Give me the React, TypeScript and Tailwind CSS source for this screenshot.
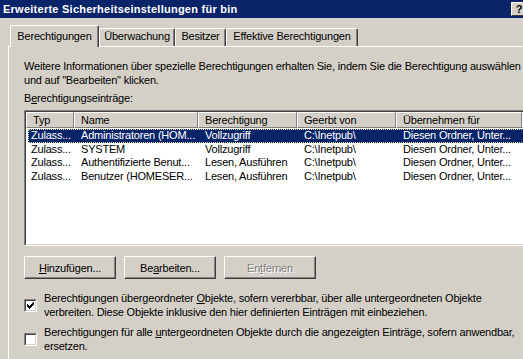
import React from "react";

const rows = [
  ["Zulass...", "Administratoren (HOM...", "Vollzugriff", "C:\\Inetpub\\", "Diesen Ordner, Unter..."],
  ["Zulass...", "SYSTEM", "Vollzugriff", "C:\\Inetpub\\", "Diesen Ordner, Unter..."],
  ["Zulass...", "Authentifizierte Benut...", "Lesen, Ausführen", "C:\\Inetpub\\", "Diesen Ordner, Unter..."],
  ["Zulass...", "Benutzer (HOMESER...", "Lesen, Ausführen", "C:\\Inetpub\\", "Diesen Ordner, Unter..."],
];

const headers = [
  { label: "Typ", w: "w-[48px]" },
  { label: "Name", w: "w-[124px]" },
  { label: "Berechtigung", w: "w-[99px]" },
  { label: "Geerbt von", w: "w-[99px]" },
  { label: "Übernehmen für", w: "w-[126px]" },
];

const cellWidths = ["w-[46px] pl-[3px]", "w-[124px] pl-[7px]", "w-[99px] pl-[7px]", "w-[99px] pl-[7px]", "w-[126px] pl-[7px]"];

function Check({ checked }: { checked?: boolean }) {
  const px = [
    [6, 0], [5, 1], [6, 1], [0, 2], [4, 2], [5, 2], [6, 2],
    [0, 3], [1, 3], [3, 3], [4, 3], [5, 3],
    [0, 4], [1, 4], [2, 4], [3, 4], [4, 4],
    [1, 5], [2, 5], [3, 5], [2, 6],
  ];
  return (
    <div className="w-[13px] h-[13px] shrink-0 bg-white border border-t-[#808080] border-l-[#808080] border-r-white border-b-white">
      <div className="w-full h-full border border-t-[#404040] border-l-[#404040] border-r-[#d4d0c8] border-b-[#d4d0c8] flex items-center justify-center">
        {checked && (
          <svg width="7" height="7" viewBox="0 0 7 7" shapeRendering="crispEdges">
            {px.map(([x, y]) => (
              <rect key={`${x}-${y}`} x={x} y={y} width="1" height="1" fill="#000" />
            ))}
          </svg>
        )}
      </div>
    </div>
  );
}

function Button({ children, disabled }: { children: React.ReactNode; disabled?: boolean }) {
  return (
    <div className="w-[92px] h-[23px] bg-[#d4d0c8] border border-t-white border-l-white border-r-[#404040] border-b-[#404040] shadow-[inset_-1px_-1px_0_#808080] flex items-center justify-center">
      <span className={disabled ? "text-[#808080] [text-shadow:1px_1px_0_#fff]" : "text-black"}>{children}</span>
    </div>
  );
}

export default function App() {
  return (
    <div className="w-[523px] h-[359px] overflow-hidden bg-[#d4d0c8] flex flex-col font-['Liberation_Sans',Arial,sans-serif] text-[11px] leading-[14px] tracking-[-0.2px] text-black">
      {/* title bar */}
      <div className="h-[18px] shrink-0 bg-[#0a246a] flex items-center justify-between pl-[3px]">
        <span className="text-white font-bold tracking-[0.25px] whitespace-nowrap">Erweiterte Sicherheitseinstellungen für bin</span>
        <div className="w-[16px] h-[14px] mr-[-4px] bg-[#d4d0c8] border border-t-white border-l-white border-r-[#404040] border-b-[#404040] flex items-center justify-center font-bold text-[11px] leading-none">
          ?
        </div>
      </div>

      <div className="flex-1 flex flex-col pl-[8px] pt-[7px]">
        {/* tabs */}
        <div className="flex items-end ml-[2px] h-[21px]">
          <div className="relative z-10 -mb-px h-[22px] w-[89px] bg-[#d4d0c8] border-l border-t border-white border-r border-r-[#404040] shadow-[inset_-1px_0_0_#808080] rounded-tl-[2px] rounded-tr-[2px] pt-[3px] text-center whitespace-nowrap">
            Berechtigungen
          </div>
          <div className="h-[18px] w-[76px] border-l border-t border-white border-r border-r-[#404040] shadow-[inset_-1px_0_0_#808080] rounded-tl-[2px] rounded-tr-[2px] text-center whitespace-nowrap">
            Überwachung
          </div>
          <div className="h-[18px] w-[51px] border-l border-t border-white border-r border-r-[#404040] shadow-[inset_-1px_0_0_#808080] rounded-tl-[2px] rounded-tr-[2px] text-center whitespace-nowrap">
            Besitzer
          </div>
          <div className="h-[18px] w-[132px] border-l border-t border-white border-r border-r-[#404040] shadow-[inset_-1px_0_0_#808080] rounded-tl-[2px] rounded-tr-[2px] text-center whitespace-nowrap">
            Effektive Berechtigungen
          </div>
        </div>

        {/* tab page */}
        <div className="flex-1 flex flex-col border-t border-l border-white pl-[15px] pt-[12px]">
          <p className="whitespace-nowrap">
            Weitere Informationen über spezielle Berechtigungen erhalten Sie, indem Sie die Berechtigung auswählen
            <br />
            und auf "Bearbeiten" klicken.
          </p>
          <div className="mt-[4px]">
            B<span className="underline">e</span>rechtigungseinträge:
          </div>

          {/* list view */}
          <div className="mt-[5px] h-[136px] w-[502px] shrink-0 border border-t-[#808080] border-l-[#808080] border-r-white border-b-white">
            <div className="h-full bg-white border border-t-[#404040] border-l-[#404040] border-r-[#d4d0c8] border-b-[#d4d0c8] flex flex-col">
              <div className="flex h-[16px] shrink-0">
                {headers.map((h) => (
                  <div
                    key={h.label}
                    className={`${h.w} shrink-0 bg-[#d4d0c8] border border-t-white border-l-white border-r-[#808080] border-b-[#808080] pl-[6px] whitespace-nowrap`}
                  >
                    {h.label}
                  </div>
                ))}
                <div className="flex-1 bg-[#d4d0c8] border border-t-white border-l-white border-r-[#808080] border-b-[#808080]" />
              </div>
              <div className="mt-[1px] flex flex-col">
                {rows.map((r, i) => (
                  <div key={i} className="h-[13.5px] pl-[2px] flex">
                    <div
                      className={
                        i === 0
                          ? "flex-1 flex bg-[#0a246a] text-white outline-1 outline-dotted outline-[#e6dc9a] -outline-offset-1 leading-[13.5px]"
                          : "flex-1 flex leading-[13.5px]"
                      }
                    >
                      {r.map((c, j) => (
                        <div key={j} className={`${cellWidths[j]} shrink-0 whitespace-nowrap`}>
                          {c}
                        </div>
                      ))}
                    </div>
                  </div>
                ))}
              </div>
            </div>
          </div>

          {/* buttons */}
          <div className="mt-[10px] flex gap-[8px]">
            <Button>
              <span className="underline">H</span>inzufügen...
            </Button>
            <Button>
              Be<span className="underline">a</span>rbeiten...
            </Button>
            <Button disabled>
              En<span className="underline">t</span>fernen
            </Button>
          </div>

          {/* options */}
          <div className="mt-[12px] flex items-center gap-[7px]">
            <Check checked />
            <div className="whitespace-nowrap">
              Berechtigungen übergeordneter <span className="underline">O</span>bjekte, sofern vererbbar, über alle untergeordneten Objekte
              <br />
              verbreiten. Diese Objekte inklusive den hier definierten Einträgen mit einbeziehen.
            </div>
          </div>
          <div className="mt-[6px] flex items-center gap-[7px]">
            <Check />
            <div className="whitespace-nowrap">
              Berechtigungen für alle <span className="underline">u</span>ntergeordneten Objekte durch die angezeigten Einträge, sofern anwendbar,
              <br />
              ersetzen.
            </div>
          </div>
        </div>
      </div>
    </div>
  );
}
